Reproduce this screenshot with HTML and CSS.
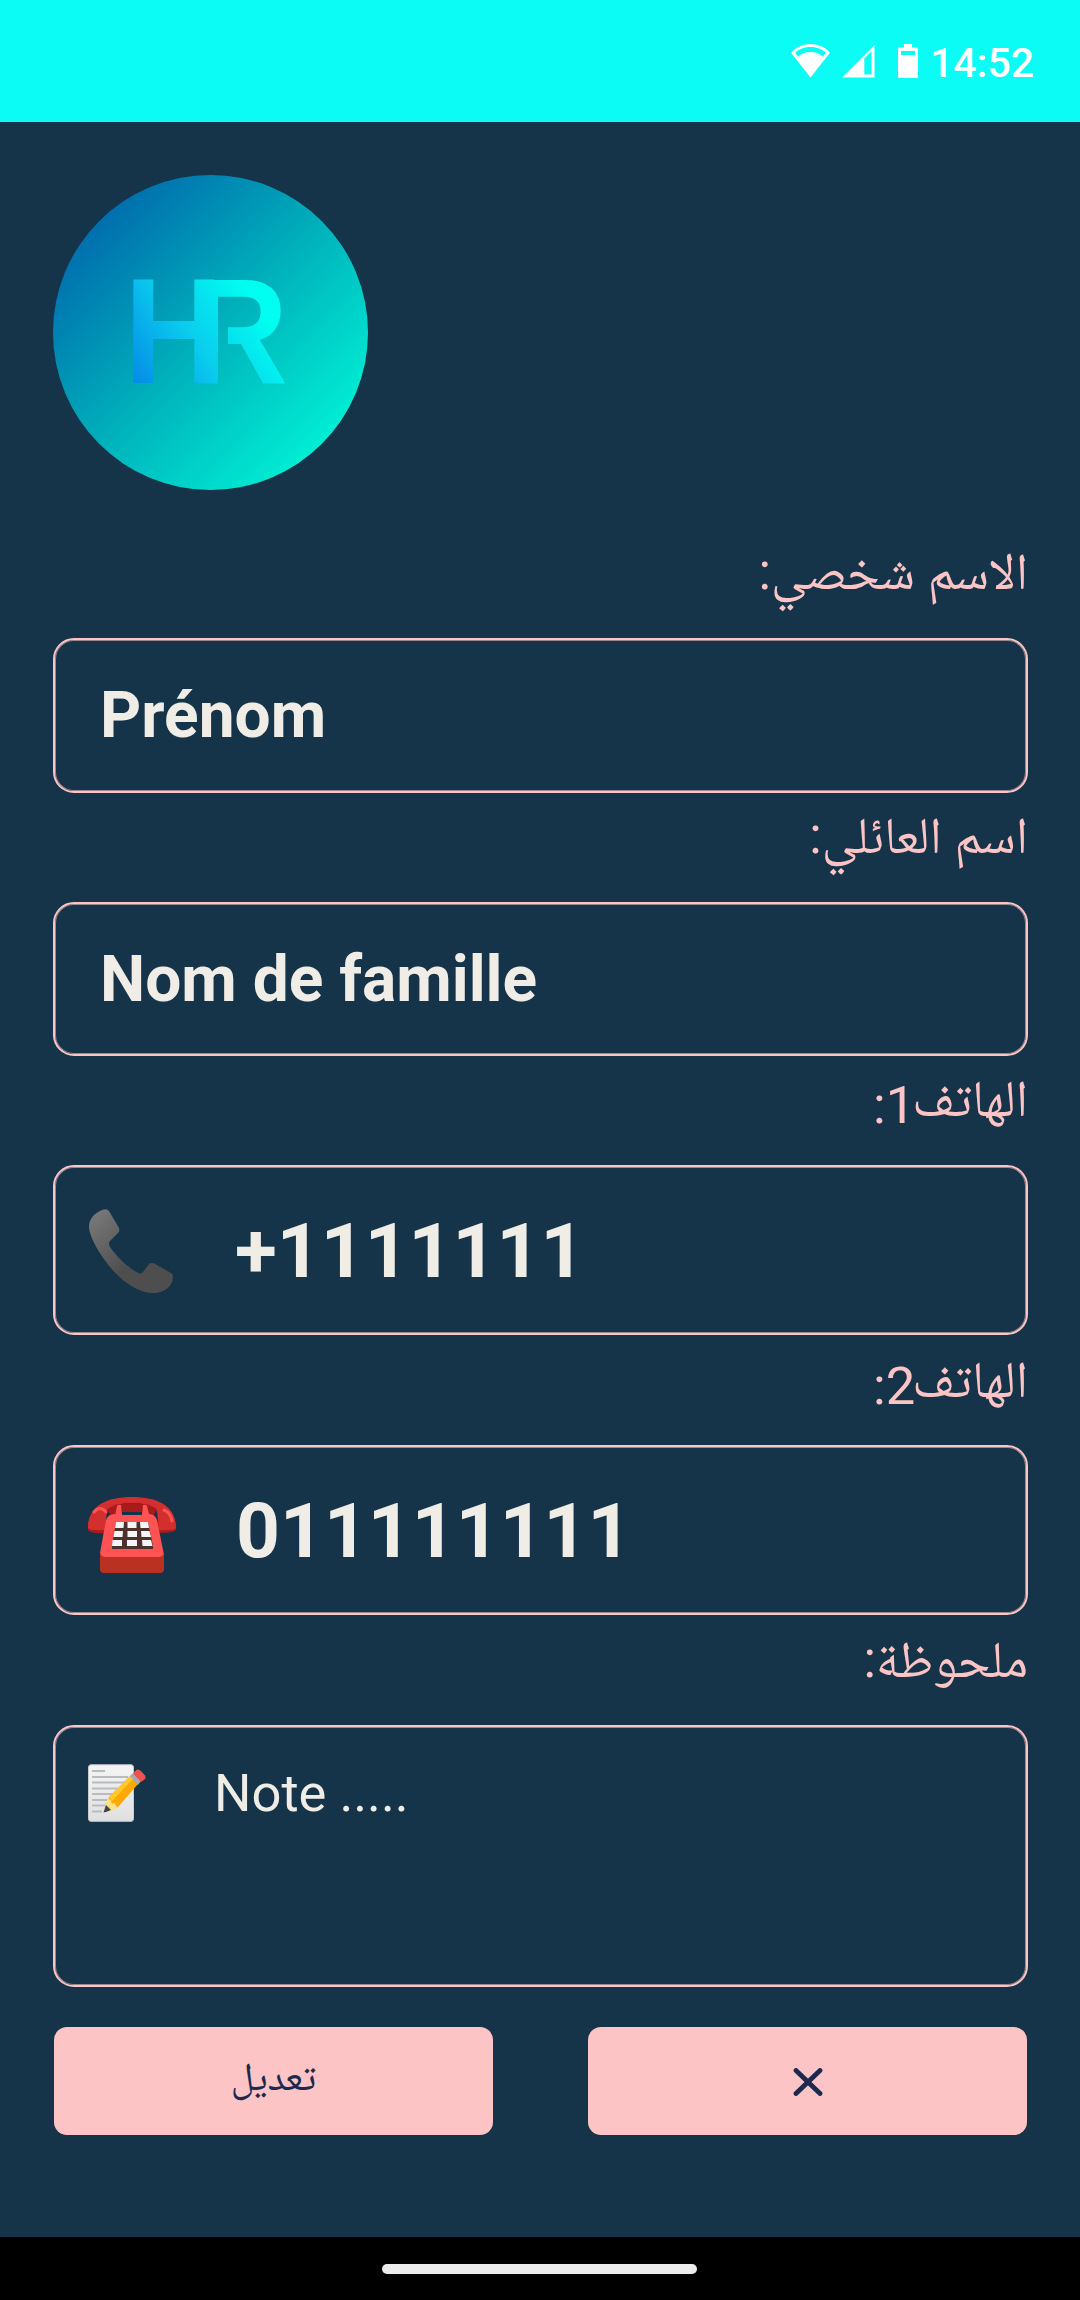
FILE: index.html
```html
<!DOCTYPE html>
<html lang="ar">
<head>
<meta charset="utf-8">
<title>HR</title>
<link rel="stylesheet" href="styles.css">
</head>
<body>
<header class="status">
  <svg class="wifi" width="39" height="34" viewBox="0 0 39 34"><path fill="#fff" fill-rule="evenodd" d="M19.500 0C28 0 34.500 3.600 39 8.800L19.500 33.500 0 8.800C4.500 3.600 11 0 19.500 0ZM19.500 3C12.500 3 7.500 5.500 4.200 8.800L7 12.800C10 10 14 8 19.500 8S29 10 32 12.800L34.800 8.800C31.500 5.500 26.500 3 19.500 3Z"/></svg>
  <svg class="signal" width="33" height="34" viewBox="0 0 33 34"><path fill="#fff" fill-rule="evenodd" d="M32.500 1V33.500H0ZM22.300 14.500V30.500H29.500V7.300Z"/></svg>
  <svg class="battery" width="20" height="34" viewBox="0 0 20 34"><path fill="#fff" fill-rule="evenodd" d="M6 0H14V3.500H18.500Q20 3.500 20 5V32.500Q20 34 18.500 34H1.500Q0 34 0 32.500V5Q0 3.500 1.500 3.500H6ZM3 7V11H17V7Z"/></svg>
  <span class="clock">14:52</span>
</header>
<main class="page">
  <svg class="avatar" width="315" height="315" viewBox="0 0 315 315">
    <defs>
      <linearGradient id="disc" gradientUnits="userSpaceOnUse" x1="46" y1="46" x2="269" y2="269">
        <stop offset="0" stop-color="#006fae"/><stop offset=".5" stop-color="#00b0bb"/><stop offset="1" stop-color="#00edd4"/>
      </linearGradient>
      <linearGradient id="mark" gradientUnits="userSpaceOnUse" x1="10" y1="0" x2="132" y2="-90">
        <stop offset="0" stop-color="#058be6"/><stop offset=".5" stop-color="#0accee"/><stop offset="1" stop-color="#00fff0"/>
      </linearGradient>
    </defs>
    <circle cx="157.500" cy="157.500" r="157.500" fill="url(#disc)"/>
    <text class="mark" transform="translate(71.300 207.500) scale(.940 1.025)" fill="url(#mark)">HR</text>
    <rect x="165" y="122.500" width="10" height="86" fill="url(#disc)"/>
  </svg>
  <form class="form">
    <label class="label first" dir="rtl">الاسم شخصي:</label>
    <div class="field name">Prénom</div>
    <label class="label" dir="rtl">اسم العائلي:</label>
    <div class="field name family">Nom de famille</div>
    <label class="label" dir="rtl">الهاتف<span class="num">1:</span></label>
    <div class="field phone">
      <svg width="84" height="84" viewBox="0 0 84 84">
        <defs><linearGradient id="handset" x1=".1" y1=".1" x2=".55" y2=".6"><stop offset="0" stop-color="#757575"/><stop offset="1" stop-color="#4e4e4e"/></linearGradient></defs>
        <path fill="url(#handset)" d="M13 1Q18-1 20 2L30 19Q31 22 29 24L21 32Q18 35 24 42C30 50 40 59 49 64Q52 66 54 63L60 55Q63 53 66 55L82 64Q84 65 84 68C84 77 75 84 65 84C53 85 36 76 21 58C7 41 0 25 0 18C0 9 6 4 13 1Z"/>
      </svg>
      <span>+1111111</span>
    </div>
    <label class="label tall" dir="rtl">الهاتف<span class="num">2:</span></label>
    <div class="field phone desk">
      <svg width="88" height="76" viewBox="0 0 88 76">
        <path fill="#a81b1b" d="M0 25V33Q3 37 18 36L24 15Q44 9 64 15L70 36Q86 36 88 33V25Z"/>
        <path fill="#d32f2f" d="M0 31C0 9 18 0 44 0S88 9 88 31Q86 34 71 33L69 14Q62 6 44 6T19 14L17 33Q2 34 0 31Z"/>
        <path fill="#a81b1b" d="M19 12Q27 6 44 6T69 12L65 20H23Z"/>
        <path fill="#163449" d="M34 15H54V19H34Z"/>
        <path fill="#ff5252" d="M27 19L29 9Q30 7 33 8L34 18H54L55 8Q58 7 59 9L61 17Q67 17 69 23L76 58Q76 61 72 61H15Q12 60 12 56L18 23Q20 17 27 17Z"/>
        <path fill="#b93221" d="M12 56Q13 60 18 60H70Q75 60 76 56V72Q76 76 72 76H16Q12 76 12 72Z"/>
        <path fill="#4e302c" d="M28 25H60L65 49V52H24V49Z"/>
        <path fill="#f5f5f5" d="M28 25h8l-.5 6h-8.500zM39.500 25h9v6h-9zM52 25h8l1 6h-8.500zM26.500 34h8.500l-.5 6h-9zM39.500 34h9.500v6h-9.500zM53 34h8.500l1.500 6h-9.500zM24.500 43h9.500v6H24zM39 43h10v6H39zM54 43h9l1.500 6h-10z"/>
        <path d="M6 15Q12 8 18 15M76 13Q83 16 84 24" fill="none" stroke="#ff5252" stroke-width="3" stroke-linecap="round"/>
      </svg>
      <span>011111111</span>
    </div>
    <label class="label tall" dir="rtl">ملحوظة:</label>
    <div class="field note">
      <svg width="58" height="58" viewBox="0 0 58 58">
        <defs><linearGradient id="paper" x2="0" y2="1"><stop offset="0" stop-color="#f4f4f4"/><stop offset="1" stop-color="#e0e0e0"/></linearGradient></defs>
        <rect x=".5" y=".8" width="45" height="56.500" rx="2.500" fill="url(#paper)" stroke="#c9cbcc"/>
        <path d="M4 7H17M4 13H40M4 18.500H39M4 24.500H34M4 30H29M4 36H24M4 41.500H20M4 47.500H14" stroke="#b9bcbd" stroke-width="1.800"/>
        <path fill="#ffe082" d="M18 38L21 33 30 43 26 46 16 48Z"/>
        <path fill="#ffa800" d="M21 33L42 12 50 20 30 43Q28 43 27 39Q23 40 23 36Q20 36 21 33Z"/>
        <path fill="#ffca28" d="M21 33L42 12 45 15 24 37Z"/>
        <path fill="#424242" d="M18 41L23 46Q18 48 15.500 48.500Z"/>
        <path fill="#a7abad" d="M42 12L45 9 53 17 50 21Z"/>
        <path fill="#ef5350" d="M45 9L49 5.500Q51 5 53 7L57 11.500Q58 14 57 15L53 18Z"/>
      </svg>
      <span>Note .....</span>
    </div>
    <div class="actions">
      <button type="button" class="btn" dir="rtl">تعديل</button>
      <button type="button" class="btn" aria-label="X"><svg width="30" height="28" viewBox="0 0 30 28"><path d="M3 2.500L27 25.500M27 2.500L3 25.500" stroke="#1b2a4e" stroke-width="4.800" stroke-linecap="round"/></svg></button>
    </div>
  </form>
</main>
<nav class="nav"><span class="pill"></span></nav>
</body>
</html>
```
FILE: styles.css
```css
* { box-sizing: border-box; }
body {
  margin: 0;
  width: 1080px;
  height: 2300px;
  display: flex;
  flex-direction: column;
  background: #153449;
  font-family: Roboto, "Noto Naskh Arabic", "DejaVu Sans", sans-serif;
}
svg { display: block; flex: none; }
.status {
  height: 122px;
  background: #0afcf4;
  display: flex;
  align-items: flex-start;
  justify-content: flex-end;
  padding: 44px 46px 0 0;
  color: #fff;
}
.signal { margin-left: 12px; }
.battery { margin-left: 23px; }
.clock {
  margin-left: 12px;
  font-size: 41px;
  line-height: 38px;
  font-weight: 500;
}
.page {
  flex: 1;
  padding: 53px 52px 0 53px;
}
.mark {
  font: bold 146px "Liberation Sans", sans-serif;
  letter-spacing: -36.5px;
}
.form { margin-top: 39px; }
.label {
  display: block;
  height: 109px;
  padding-top: 3px;
  color: #fcc4c4;
  font-size: 51.6px;
  line-height: 80px;
}
.label.tall {
  height: 110px;
  padding-top: 5px;
}
.num {
  margin-right: -3px;
  font-size: 52.5px;
  line-height: 0;
  vertical-align: -7px;
}
.field {
  display: flex;
  align-items: center;
  border: 2px solid #fcc4c4;
  border-radius: 21px;
  box-shadow: inset 0 0 0 1px #9b878f;
  color: #f0ede6;
}
.name {
  height: 155px;
  padding-left: 45px;
  font-size: 64px;
  font-weight: 700;
}
.family { height: 154px; }
.phone {
  height: 170px;
  padding: 2px 0 0 34px;
  font-size: 76.6px;
  font-weight: 700;
}
.phone span { margin-left: 62px; }
.desk { padding-left: 33px; }
.desk svg { margin-top: 8px; }
.desk span { margin-left: 60px; }
.note {
  height: 262px;
  align-items: flex-start;
  padding: 37px 0 0 33px;
  font-size: 52.5px;
  line-height: 58px;
}
.note span { margin-left: 68px; }
.actions {
  display: flex;
  gap: 95px;
  margin: 40px 1px 0;
}
.btn {
  flex: 1;
  height: 108px;
  display: flex;
  align-items: center;
  justify-content: center;
  border: 0;
  border-radius: 13px;
  background: #fcc4c4;
  color: #1b2a4e;
  font-family: inherit;
  font-size: 39.4px;
  padding-top: 2px;
}
.nav {
  height: 63px;
  background: #000;
  display: flex;
  align-items: center;
  justify-content: center;
}
.pill {
  width: 315px;
  height: 10px;
  margin-right: 1px;
  border-radius: 5px;
  background: #ececec;
}
```
